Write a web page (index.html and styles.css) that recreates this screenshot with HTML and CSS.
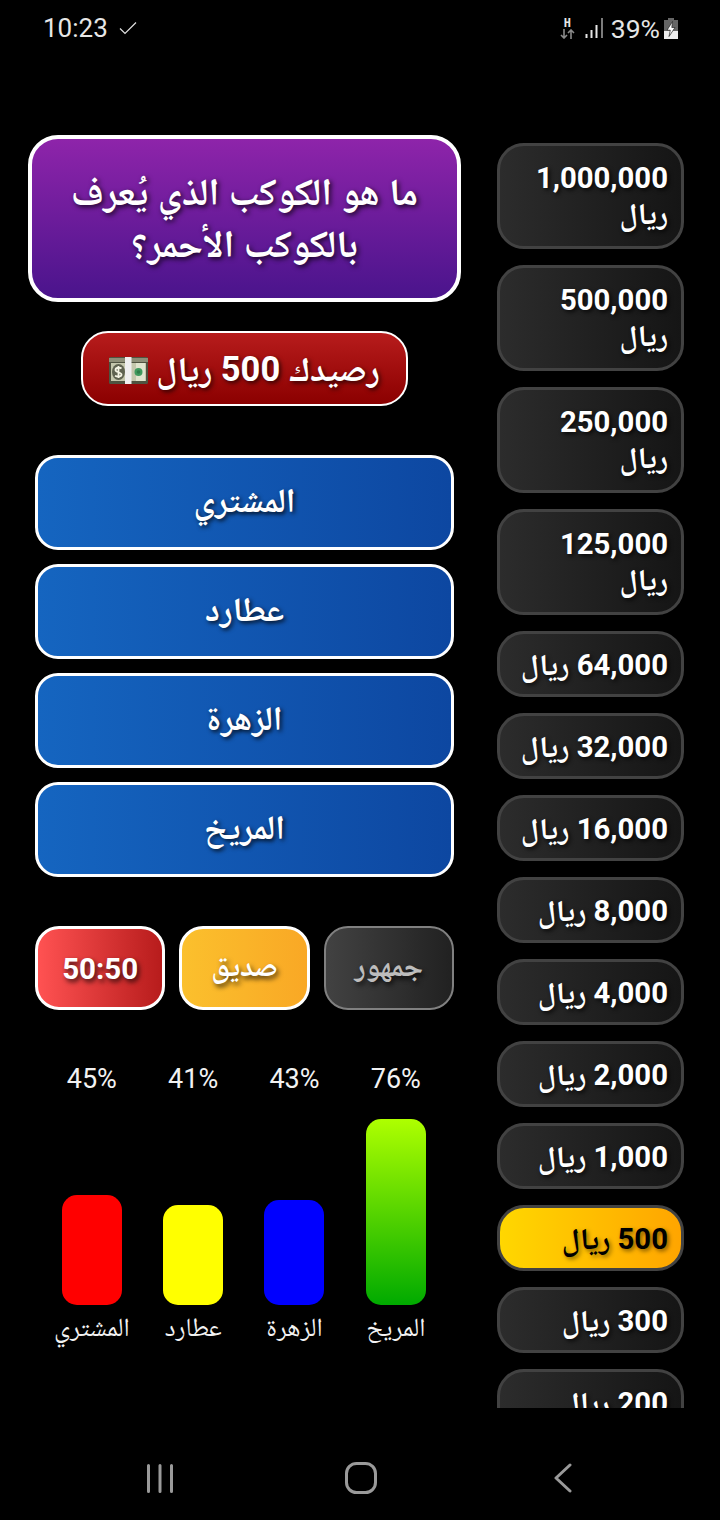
FILE: index.html
```html
<!DOCTYPE html>
<html lang="ar">
<head>
<meta charset="utf-8">
<title>من سيربح المليون</title>
<link rel="stylesheet" href="styles.css">
</head>
<body>
<div class="screen">
  <header class="status" dir="ltr">
    <div class="status-left">
      <span class="clock">10:23</span>
      <svg class="check" width="18" height="14" viewBox="0 0 18 14"><path d="M1 7.500l5 5L17 1.500" fill="none" stroke="#e0e0e0" stroke-width="1.200"/></svg>
    </div>
    <div class="status-right">
      <span class="net"><span class="net-h">H</span>
        <svg width="15" height="10" viewBox="0 0 15 10"><path d="M4 0v9M1 6l3 3 3-3M11 10V1M8 4l3-3 3 3" fill="none" stroke="#8a8a8a" stroke-width="1.600"/></svg>
      </span>
      <svg class="signal" width="18" height="20" viewBox="0 0 18 20"><path d="M1.500 16v4M6.500 12v8M11.500 7v13" stroke="#e6e6e6" stroke-width="2"/><path d="M17 0v20" stroke="#8a8a8a" stroke-width="1.800"/></svg>
      <span class="battery-text">39%</span>
      <svg class="battery" width="14" height="21" viewBox="0 0 14 21"><path d="M4 0h6v2h4v19H0V2h4z" fill="#666"/><path d="M0 13h14v8H0z" fill="#ededed"/><path d="M8.500 3.500L3 12.200h3.300L5 18.500l6-9H7.800z" fill="#fff" stroke="#222" stroke-width=".7"/></svg>
    </div>
  </header>

  <main class="game" dir="rtl">
    <ol class="ladder">
      <li class="rung rung-tall"><span>1,000,000 <span class="unit">ريال</span></span></li>
      <li class="rung rung-tall"><span>500,000 <span class="unit">ريال</span></span></li>
      <li class="rung rung-tall"><span>250,000 <span class="unit">ريال</span></span></li>
      <li class="rung rung-tall"><span>125,000 <span class="unit">ريال</span></span></li>
      <li class="rung"><span>64,000 <span class="unit">ريال</span></span></li>
      <li class="rung"><span>32,000 <span class="unit">ريال</span></span></li>
      <li class="rung"><span>16,000 <span class="unit">ريال</span></span></li>
      <li class="rung"><span>8,000 <span class="unit">ريال</span></span></li>
      <li class="rung"><span>4,000 <span class="unit">ريال</span></span></li>
      <li class="rung"><span>2,000 <span class="unit">ريال</span></span></li>
      <li class="rung"><span>1,000 <span class="unit">ريال</span></span></li>
      <li class="rung rung-current"><span>500 <span class="unit">ريال</span></span></li>
      <li class="rung"><span>300 <span class="unit">ريال</span></span></li>
      <li class="rung"><span>200 <span class="unit">ريال</span></span></li>
    </ol>

    <section class="play">
      <h1 class="question">ما هو الكوكب الذي يُعرف بالكوكب الأحمر؟</h1>
      <div class="balance">
        <span>رصيدك 500 ريال</span>
        <svg class="cash" width="39" height="27" viewBox="0 0 39 27">
          <rect x="0" y="0" width="39" height="27" rx="1.500" fill="#4f5340"/>
          <rect x="0" y="1" width="39" height="4" fill="#8d8f78"/>
          <rect x="2" y="6" width="35" height="18" fill="#c4c7ac"/>
          <rect x="27" y="6" width="9" height="18" fill="#e0e4cd"/>
          <circle cx="29.500" cy="15" r="4" fill="#3f9a5d"/>
          <circle cx="29.500" cy="15" r="1.800" fill="#2f7d49"/>
          <ellipse cx="9.500" cy="15" rx="6.500" ry="8" fill="#5f6350"/>
          <path d="M12.500 11.500c-2-1.500-6-1-6 1.500s6 2 6 4.500-4 2.500-6.500 1.300M9.500 9v12" fill="none" stroke="#f4f4e4" stroke-width="1.800"/>
          <rect x="16" y="0" width="6.500" height="27" fill="#efefef"/>
        </svg>
      </div>
      <div class="answers">
        <button class="answer">المشتري</button>
        <button class="answer">عطارد</button>
        <button class="answer">الزهرة</button>
        <button class="answer">المريخ</button>
      </div>
      <div class="lifelines">
        <button class="lifeline lifeline-used">جمهور</button>
        <button class="lifeline lifeline-friend">صديق</button>
        <button class="lifeline lifeline-half">50:50</button>
      </div>
      <div class="chart">
        <div class="col"><span class="pct">76%</span><div class="bar bar-green" style="height:186px"></div><span class="label">المريخ</span></div>
        <div class="col"><span class="pct">43%</span><div class="bar bar-blue" style="height:105px"></div><span class="label">الزهرة</span></div>
        <div class="col"><span class="pct">41%</span><div class="bar bar-yellow" style="height:100px"></div><span class="label">عطارد</span></div>
        <div class="col"><span class="pct">45%</span><div class="bar bar-red" style="height:110px"></div><span class="label">المشتري</span></div>
      </div>
    </section>
  </main>

  <nav class="navbar" dir="ltr">
    <svg class="nav-recent" width="26" height="29" viewBox="0 0 26 29"><path d="M1.500 1.500v26M13 1.500v26M24.500 1.500v26" stroke="#9a9a9a" stroke-width="3" stroke-linecap="round" fill="none"/></svg>
    <svg class="nav-home" width="32" height="32" viewBox="0 0 32 32"><rect x="1.500" y="1.500" width="29" height="29" rx="10" stroke="#9a9a9a" stroke-width="3" fill="none"/></svg>
    <svg width="18" height="30" viewBox="0 0 18 30"><path d="M16 2L2 15l14 13" stroke="#9a9a9a" stroke-width="3" stroke-linecap="round" stroke-linejoin="round" fill="none"/></svg>
  </nav>
</div>
</body>
</html>
```

FILE: styles.css
```css
* { box-sizing: border-box; }
html, body { margin: 0; padding: 0; background: #000; }
body { font-family: Roboto, "Noto Naskh Arabic", sans-serif; color: #fff; }
.screen { width: 720px; height: 1520px; display: flex; flex-direction: column; overflow: hidden; background: #000; }

.status { height: 56px; flex: none; display: flex; justify-content: space-between; align-items: center; padding: 0 42px 0 43px; color: #e6e6e6; }
.status-left, .status-right { display: flex; align-items: center; }
.clock { font-size: 26px; }
.check { margin-left: 11px; }
.status-right { gap: 8px; }
.net { display: flex; flex-direction: column; align-items: center; width: 15px; margin-right: 2px; }
.net-h { font-size: 12px; font-weight: 700; line-height: 12px; font-family: "DejaVu Sans Mono", monospace; }
.battery-text { font-size: 26.500px; }
.battery { margin-left: -4px; }

.game { height: 1352px; flex: none; overflow: hidden; display: flex; align-items: flex-start; padding: 79px 36px 0 0; gap: 36px; }

.ladder { list-style: none; margin: 8px 0 0; padding: 0; width: 187px; flex: none; display: flex; flex-direction: column; gap: 16px; }
.rung { height: 66px; flex: none; padding: 2px 13px 0; display: flex; align-items: center; border: 3px solid #424242; border-radius: 27px; background: linear-gradient(to left, #151515, #2c2c2c); font-size: 29.300px; line-height: 41px; font-weight: 700; text-shadow: 2px 2px 4px rgba(0,0,0,.8); }
.rung-tall { height: 106px; padding-top: 0; line-height: 36px; }
.rung-current { background: linear-gradient(to right, #ffd700, #ffa500); color: #000; text-shadow: 2px 2px 4px rgba(0,0,0,.5); }
.unit { font-size: 30px; }

.play { width: 433px; flex: none; display: flex; flex-direction: column; align-items: center; }
.question { width: 100%; height: 167px; margin: 0; padding: 0 30px 2px; display: flex; align-items: center; justify-content: center; text-align: center; border: 4px solid #fff; border-radius: 30px; background: linear-gradient(to bottom, #8e24aa, #4a148c); font-size: 38px; line-height: 52px; font-weight: 700; text-shadow: 2px 2px 5px rgba(0,0,0,.8); }
.balance { margin-top: 29px; width: 327px; height: 75px; padding-top: 10px; display: flex; align-items: center; justify-content: center; gap: 8px; border: 2px solid #fff; border-radius: 27px; background: linear-gradient(to bottom, #b71c1c, #8b0000); font-size: 34.500px; font-weight: 700; text-shadow: 2px 2px 4px rgba(0,0,0,.7); }
.cash { margin-top: -6px; }
.answers { margin-top: 49px; width: 419px; display: flex; flex-direction: column; gap: 14px; }
.answer { height: 95px; padding: 4px 0 0; border: 3px solid #fff; border-radius: 23px; background: linear-gradient(to right, #1565c0, #0d47a1); color: #fff; font: 700 34px Roboto, "Noto Naskh Arabic", sans-serif; text-shadow: 2px 2px 4px rgba(0,0,0,.8); }
.lifelines { margin-top: 49px; width: 419px; display: grid; grid-template-columns: repeat(3, 1fr); gap: 14px; }
.lifeline { height: 84px; padding: 2px 0 0; border: 3px solid #fff; border-radius: 24px; color: #fff; font: 700 29.500px Roboto, "Noto Naskh Arabic", sans-serif; text-shadow: 2px 3px 5px rgba(0,0,0,.75); }
.lifeline-half { background: linear-gradient(to right, #ff5252, #b71c1c); }
.lifeline-friend { background: linear-gradient(to right, #fbc02d, #f9a825); }
.lifeline-used { background: linear-gradient(to right, #424242, #212121); border: 2px solid #808080; color: #bdbdbd; }

.chart { margin-top: 53px; padding-right: 1.400px; display: grid; grid-template-columns: repeat(4, 101.330px); justify-content: center; }
.col { height: 280px; display: flex; flex-direction: column; align-items: center; }
.pct { font-size: 27px; line-height: 32px; color: #f2f2f2; margin-bottom: auto; }
.label { font-size: 26px; line-height: 32px; margin-top: 6px; color: #f2f2f2; white-space: nowrap; }
.bar { width: 60px; border-radius: 15px; flex: none; }
.bar-green { background: linear-gradient(to bottom, #aeff00, #00aa00); }
.bar-blue { background: #0000ff; }
.bar-yellow { background: #ffff00; }
.bar-red { background: #ff0000; }

.navbar { flex: none; height: 112px; display: flex; align-items: center; padding: 28px 0 0 147px; }
.nav-recent { margin-right: 172px; }
.nav-home { margin-right: 177px; }
```
